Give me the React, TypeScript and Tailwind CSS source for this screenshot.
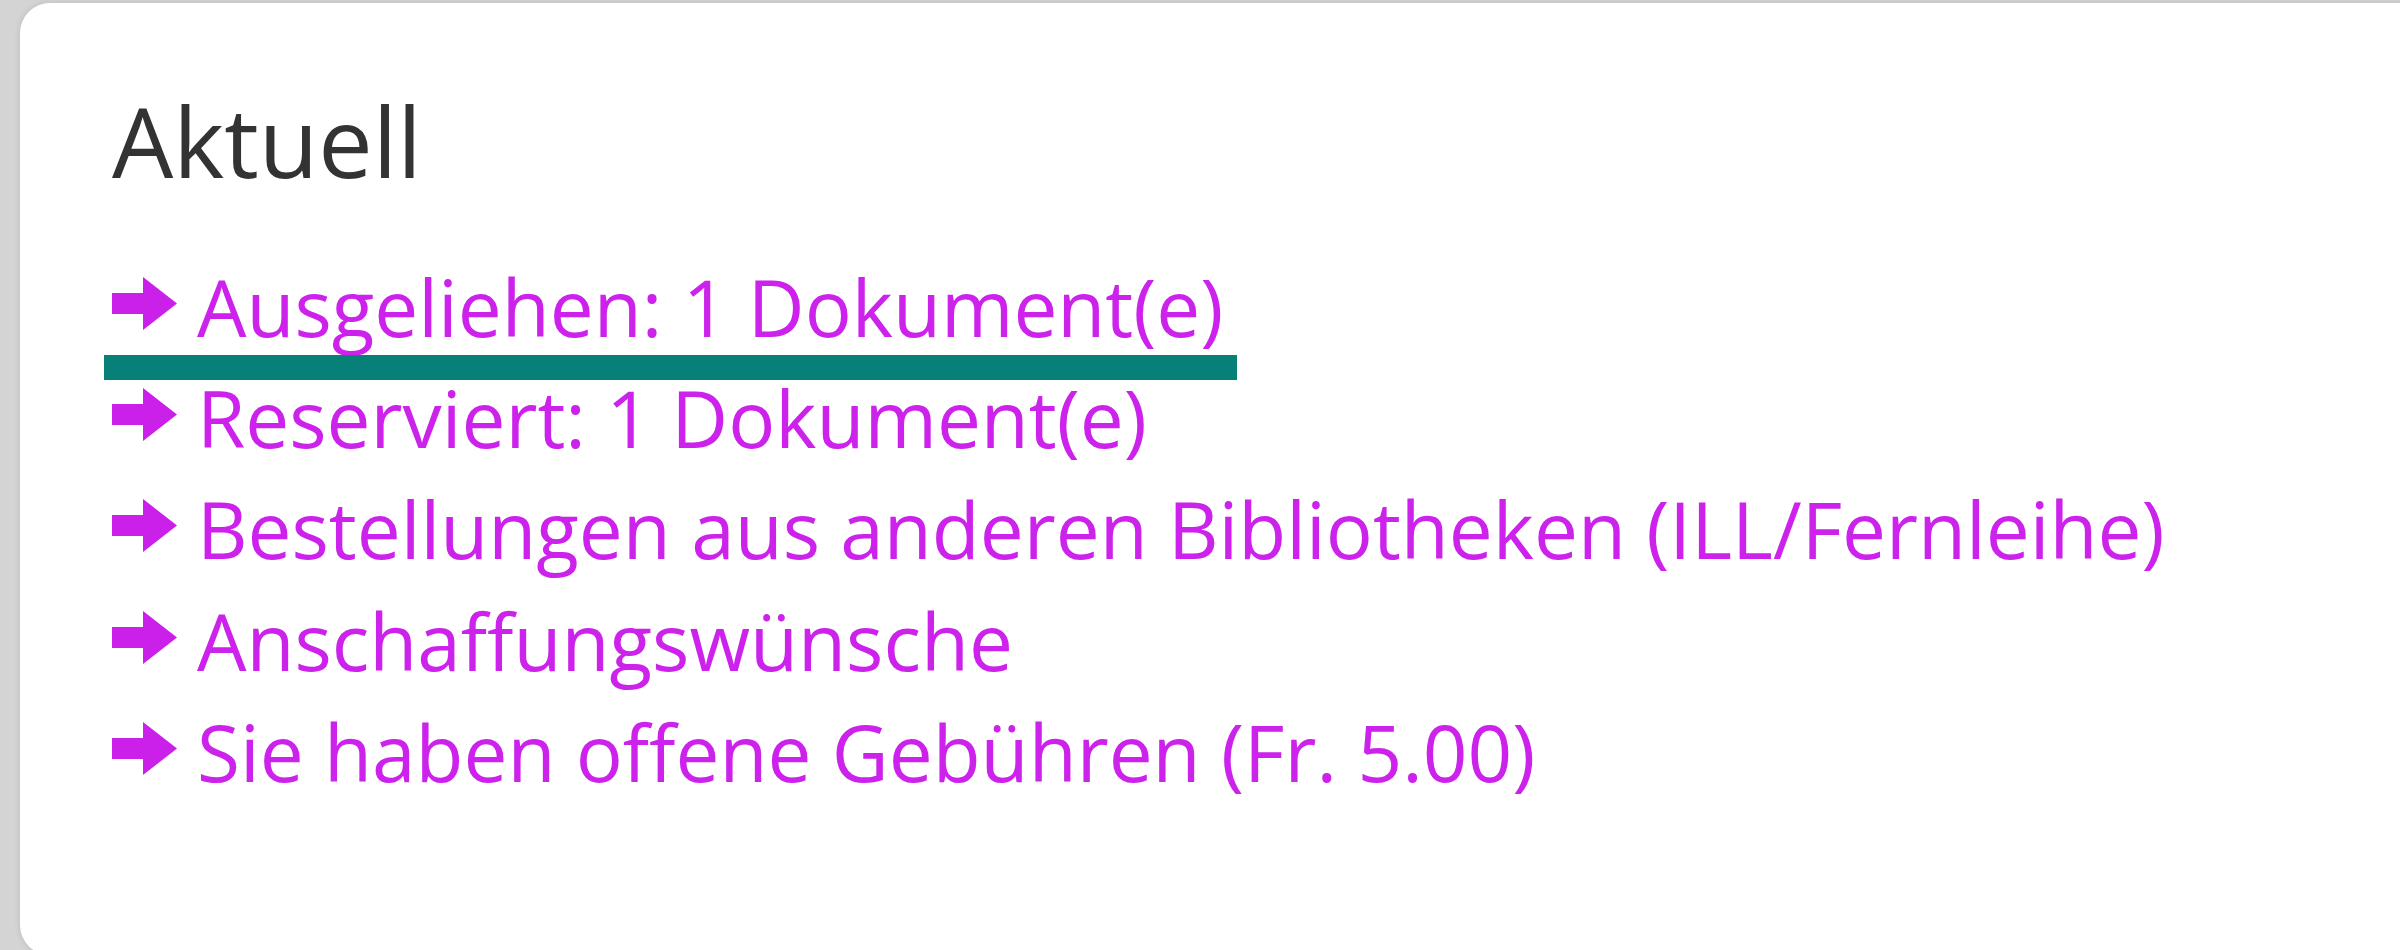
import React from "react";

const links = [
  "Ausgeliehen: 1 Dokument(e)",
  "Reserviert: 1 Dokument(e)",
  "Bestellungen aus anderen Bibliotheken (ILL/Fernleihe)",
  "Anschaffungswünsche",
  "Sie haben offene Gebühren (Fr. 5.00)",
];

function Arrow() {
  return (
    <svg width="65" height="53" viewBox="0 0 65 53" className="mt-[26px] shrink-0">
      <polygon points="0,16 31,16 31,0 65,26.5 31,53 31,37 0,37" fill="#cb1fea" />
    </svg>
  );
}

export default function App() {
  return (
    <div
      className="w-[2400px] h-[950px] overflow-hidden bg-[#d4d4d4]"
      style={{ fontFamily: '"Open Sans", "Noto Sans", sans-serif' }}
    >
      <div className="ml-[20px] mt-[3px] w-[2440px] h-[952px] bg-white rounded-[30px] shadow-[0_0_6px_rgba(0,0,0,0.12)] pl-[92px] pt-[84px]">
        <h4 className="text-[97px] leading-[1.1] font-normal text-[#333333] m-0">Aktuell</h4>
        <ul className="mt-[57px] list-none p-0">
          {links.map((t, i) => (
            <li key={i} className="h-[111.4px]">
              <a className="relative inline-flex items-start gap-[20px] text-[78.3px] leading-[111.4px] text-[#cc22ec] no-underline cursor-pointer">
                <Arrow />
                <span>{t}</span>
                {i === 0 && (
                  <span className="absolute left-[-8px] right-[-14px] top-[104px] h-[25px] bg-[#078078]" />
                )}
              </a>
            </li>
          ))}
        </ul>
      </div>
    </div>
  );
}
